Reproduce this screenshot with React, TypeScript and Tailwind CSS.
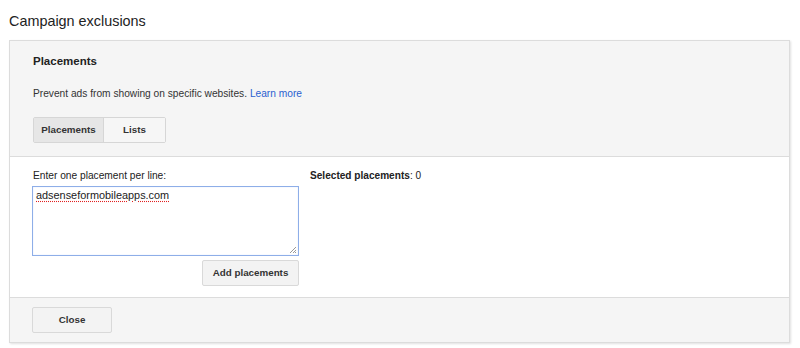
import React from "react";

export default function App() {
  return (
    <div className="w-[800px] h-[348px] bg-white text-[#222] overflow-hidden" style={{ fontFamily: '"Liberation Sans", Arial, sans-serif' }}>
      <div className="pl-[9px] pt-[12px] h-[40px] text-[14.4px] leading-[18px] text-[#222]">Campaign exclusions</div>
      <div className="ml-[9px] w-[781px] border border-[#dcdcdc] shadow-[1px_1px_2px_rgba(0,0,0,0.12)]">
        <div className="bg-[#f5f5f5] h-[116px] pl-[23px] pt-[13px] border-b border-[#dcdcdc]">
          <div className="text-[11.5px] font-bold leading-[15px] text-[#222]">Placements</div>
          <div className="mt-[18px] text-[10.2px] leading-[13px] text-[#333]">
            Prevent ads from showing on specific websites. <span className="text-[#2a5fd0]">Learn more</span>
          </div>
          <div className="mt-[17px] flex w-[133px] h-[26px] border border-[#d6d6d6] rounded-[2px] text-[9.8px] font-bold text-[#333]">
            <div className="w-[70px] flex items-center justify-center bg-[#e6e6e6] border-r border-[#d6d6d6]">Placements</div>
            <div className="flex-1 flex items-center justify-center bg-[#f6f6f6]">Lists</div>
          </div>
        </div>
        <div className="bg-white h-[141px] pl-[22px] pt-[12px] flex border-b border-[#dcdcdc]">
          <div className="w-[267px] flex flex-col">
            <div className="text-[10.2px] leading-[13px] text-[#222] pl-[1px]">Enter one placement per line:</div>
            <div className="mt-[4px] h-[70px] border border-[#8eaee8] shadow-[inset_0_0_1px_rgba(77,144,254,0.4)] px-[3px] pt-[1px] relative text-[10.9px] leading-[14px]">
              <span className="text-[#222] underline decoration-dotted decoration-[#e02020] underline-offset-2">adsenseformobileapps.com</span>
              <svg className="absolute right-[1px] bottom-[1px]" width="8" height="8" viewBox="0 0 8 8">
                <path d="M7 1 L1 7 M7 4 L4 7 M7 6 L6 7" stroke="#999" strokeWidth="1" />
              </svg>
            </div>
            <div className="mt-[4px] flex justify-end">
              <div className="w-[97px] h-[26px] flex items-center justify-center border border-[#d9d9d9] rounded-[2px] bg-[#f3f3f3] text-[9.8px] font-bold text-[#333]">Add placements</div>
            </div>
          </div>
          <div className="ml-[11px] text-[10.1px] leading-[13px] text-[#222]"><span className="font-bold">Selected placements</span>: 0</div>
        </div>
        <div className="bg-[#f5f5f5] h-[44px] pl-[22px] pt-[9px]">
          <div className="w-[80px] h-[26px] flex items-center justify-center border border-[#d9d9d9] rounded-[2px] bg-[#f3f3f3] text-[9.8px] font-bold text-[#333]">Close</div>
        </div>
      </div>
    </div>
  );
}
